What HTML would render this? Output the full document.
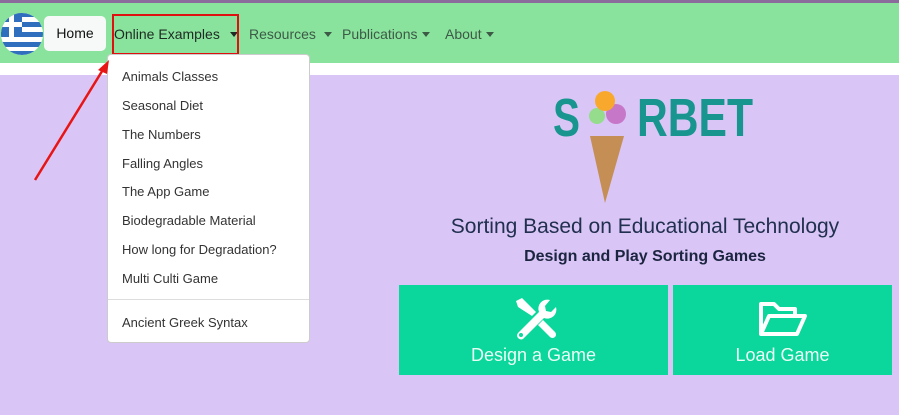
<!DOCTYPE html>
<html><head><meta charset="utf-8"><style>
*{margin:0;padding:0;box-sizing:border-box}
body{width:899px;height:415px;overflow:hidden;background:#d9c5f6;font-family:"Liberation Sans",sans-serif;position:relative}
.top{position:absolute;left:0;top:0;width:899px;height:3px;background:#8b6b9c}
.nav{position:absolute;left:0;top:3px;width:899px;height:60px;background:#8ae39d}
.white{position:absolute;left:0;top:63px;width:899px;height:12px;background:#fff}
.nl{position:absolute;top:26px;font-size:14px;color:#3c5a46}
.home{position:absolute;left:44px;top:16px;width:62px;height:35px;background:#f7f9f9;border-radius:5px;font-size:14px;color:#111;text-align:center;line-height:35px}
.car{display:inline-block;width:0;height:0;border-left:4px solid transparent;border-right:4px solid transparent;border-top:5px solid currentColor;vertical-align:2px;margin-left:4px}
.red{position:absolute;left:112px;top:14px;width:127px;height:41px;border:2px solid #e01010}
.dd{position:absolute;left:107px;top:54px;width:203px;height:289px;background:#fff;border:1px solid #ccc;border-radius:4px}
.dd .it{position:absolute;left:14px;font-size:13px;color:#333}
.dd .hr{position:absolute;left:0;top:244px;width:201px;height:1px;background:#ddd}
.btn{position:absolute;top:285px;height:90px;background:#0bd69b;color:#eafff5;font-size:18px;text-align:center}
.btn span{position:absolute;left:0;right:0;top:60px}
</style></head><body>
<div class="top"></div><div class="nav"></div><div class="white"></div>
<svg style="position:absolute;left:0;top:12px" width="44" height="44" viewBox="0 0 44 44">
<defs><clipPath id="c"><circle cx="22" cy="22" r="21"/></clipPath></defs>
<g clip-path="url(#c)"><rect width="44" height="44" fill="#fff"/>
<g fill="#2f6fbe"><rect y="0" width="44" height="5"/><rect y="10" width="44" height="5"/><rect y="20" width="44" height="5"/><rect y="30" width="44" height="5"/><rect y="39" width="44" height="5"/>
<rect x="0" y="0" width="22" height="25"/></g>
<rect x="9" y="0" width="5" height="25" fill="#fff"/><rect x="0" y="10" width="22" height="5" fill="#fff"/></g></svg>
<div class="home">Home</div>
<div class="nl" style="left:114px;color:#1e2a22">Online Examples <span class="car" style="margin-left:6px"></span></div>
<div class="nl" style="left:249px">Resources <span class="car"></span></div>
<div class="nl" style="left:342px">Publications<span class="car"></span></div>
<div class="nl" style="left:445px">About<span class="car"></span></div>
<div class="red"></div>
<div class="dd">
<div class="it" style="top:14px">Animals Classes</div><div class="it" style="top:43px">Seasonal Diet</div><div class="it" style="top:72px">The Numbers</div><div class="it" style="top:101px">Falling Angles</div><div class="it" style="top:129px">The App Game</div><div class="it" style="top:158px">Biodegradable Material</div><div class="it" style="top:187px">How long for Degradation?</div><div class="it" style="top:216px">Multi Culti Game</div><div class="hr"></div><div class="it" style="top:260px">Ancient Greek Syntax</div>
</div>
<svg style="position:absolute;left:0;top:0" width="200" height="200"><line x1="35" y1="180" x2="104" y2="68" stroke="#e81515" stroke-width="2.5"/><polygon points="109,60 98,70 107,74" fill="#e81515"/></svg>
<svg style="position:absolute;left:550px;top:88px" width="210" height="118">
<text x="3" y="48" font-family="Liberation Sans" font-weight="bold" font-size="54" fill="#17958e" textLength="27" lengthAdjust="spacingAndGlyphs">S</text>
<text x="87" y="48" font-family="Liberation Sans" font-weight="bold" font-size="54" fill="#17958e" textLength="116" lengthAdjust="spacingAndGlyphs">RBET</text>
<polygon points="40,48 74,48 55,115" fill="#c48e55"/>
<circle cx="47" cy="28" r="8" fill="#95dc8c"/><circle cx="66" cy="26" r="10" fill="#c777c7"/><circle cx="55" cy="13" r="10" fill="#f8a92d"/>
</svg>
<div style="position:absolute;left:400px;top:215px;width:490px;text-align:center;font-size:21px;color:#22304f">Sorting Based on Educational Technology</div>
<div style="position:absolute;left:400px;top:248px;width:490px;text-align:center;font-size:16px;font-weight:bold;color:#1c2540">Design and Play Sorting Games</div>
<div class="btn" style="left:399px;width:269px">
<svg style="position:absolute;left:113px;top:12px" width="46" height="46" viewBox="0 0 46 46" fill="#fff"><path d="M4 4l6-3 14 14-4 4L6 10z"/><path d="M38 3a9 9 0 0 0-11 12L6 36a4 4 0 0 0 5 6l21-21a9 9 0 0 0 12-11l-5 5-5-1-1-5z" /><circle cx="9" cy="38" r="2" fill="#0bd69b"/><path d="M26 28l5-5 12 12a3 3 0 0 1-5 5z"/></svg>
<span>Design a Game</span></div>
<div class="btn" style="left:673px;width:219px">
<svg style="position:absolute;left:85px;top:16px" width="50" height="36" viewBox="0 0 50 36" fill="none" stroke="#fff" stroke-width="4" stroke-linejoin="round"><path d="M3 33V3h13l5 5h16v7"/><path d="M3 33l8-18h36l-8 18z"/></svg>
<span>Load Game</span></div>
</body></html>
